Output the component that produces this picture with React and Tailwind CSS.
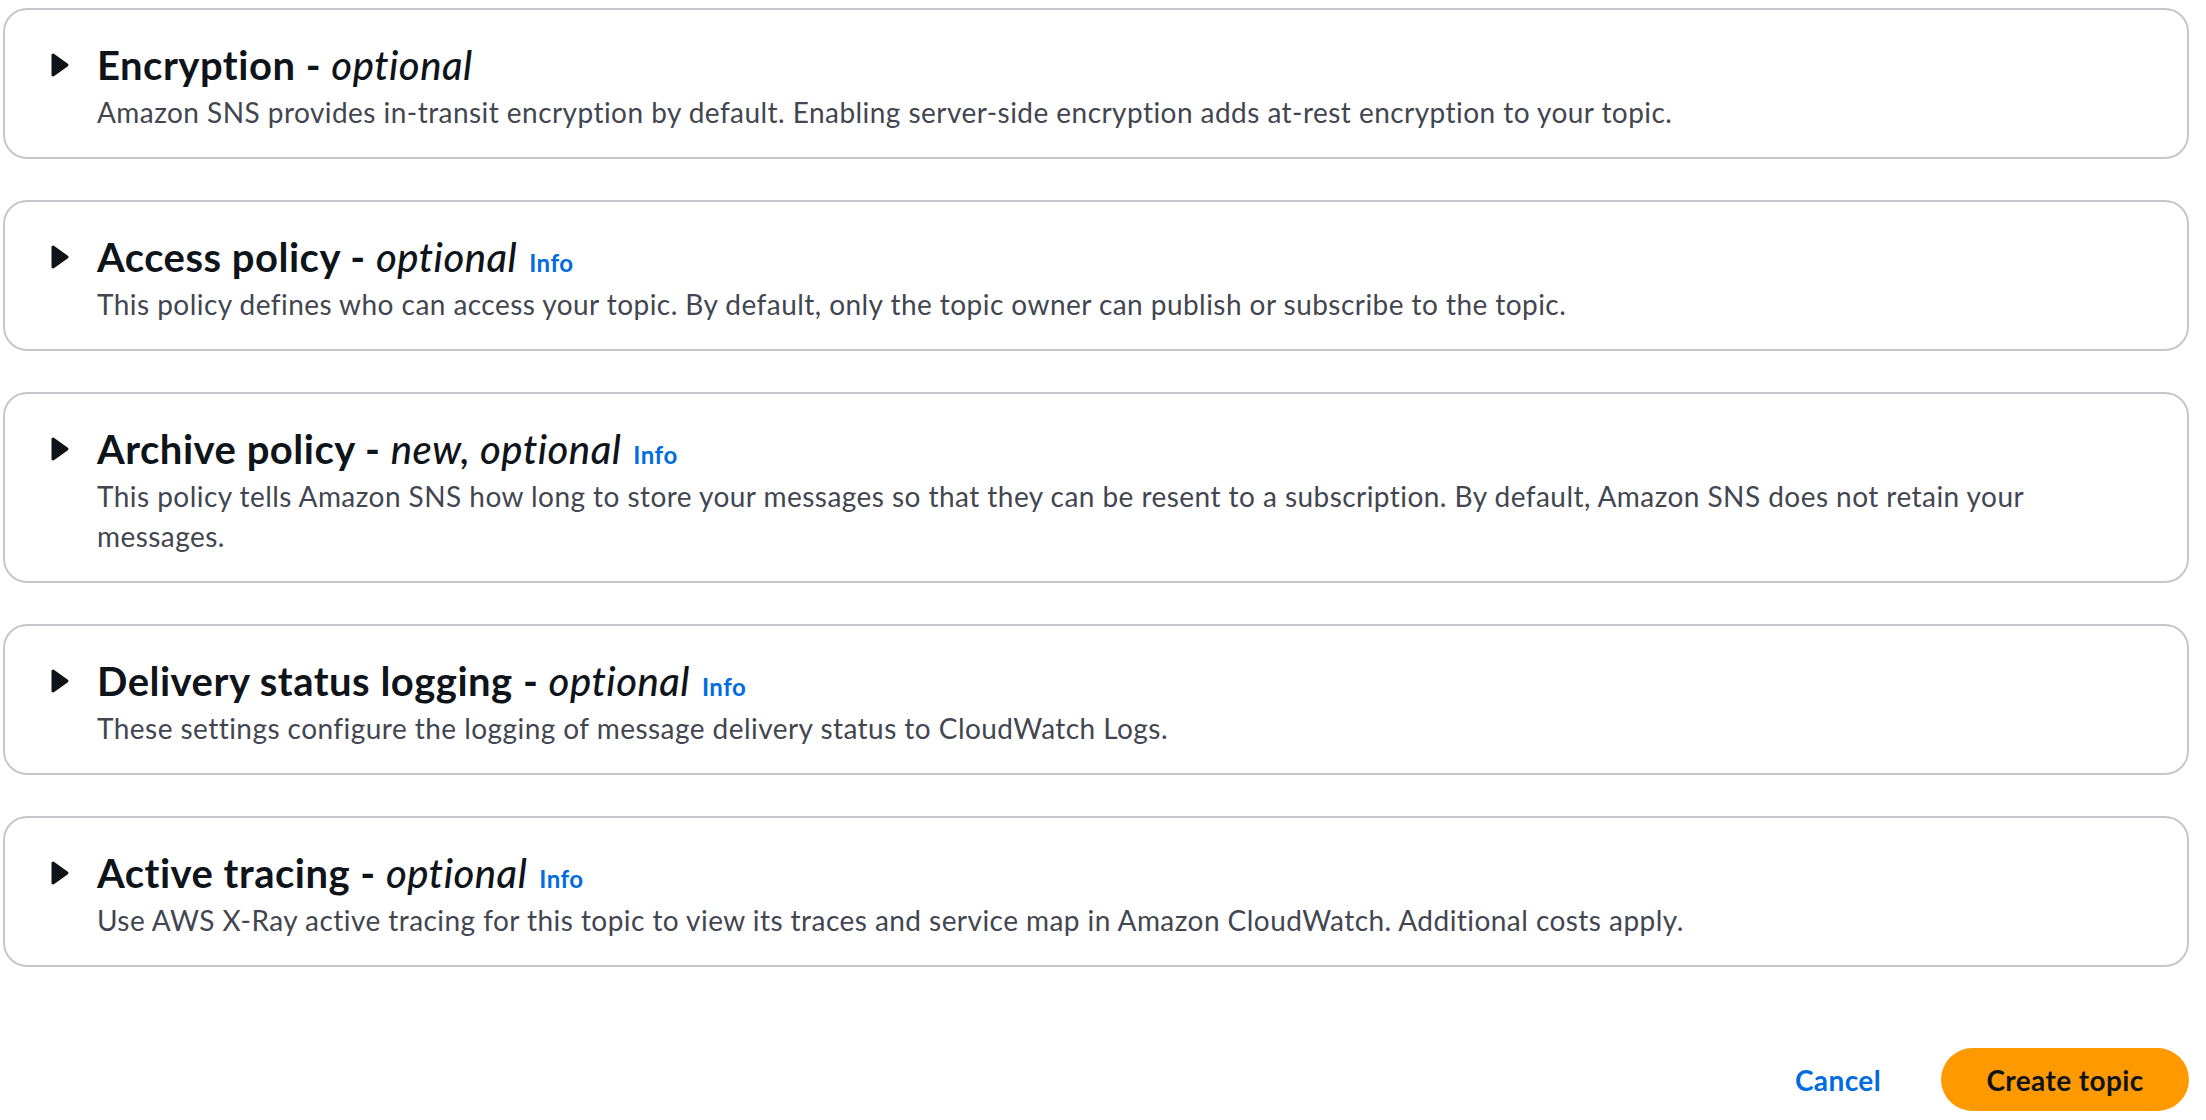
import React from 'react'

const SECTIONS = [
  {
    title: 'Encryption',
    tag: 'optional',
    info: false,
    desc: 'Amazon SNS provides in-transit encryption by default. Enabling server-side encryption adds at-rest encryption to your topic.',
  },
  {
    title: 'Access policy',
    tag: 'optional',
    info: true,
    desc: 'This policy defines who can access your topic. By default, only the topic owner can publish or subscribe to the topic.',
  },
  {
    title: 'Archive policy',
    tag: 'new, optional',
    info: true,
    desc: 'This policy tells Amazon SNS how long to store your messages so that they can be resent to a subscription. By default, Amazon SNS does not retain your messages.',
  },
  {
    title: 'Delivery status logging',
    tag: 'optional',
    info: true,
    desc: 'These settings configure the logging of message delivery status to CloudWatch Logs.',
  },
  {
    title: 'Active tracing',
    tag: 'optional',
    info: true,
    desc: 'Use AWS X-Ray active tracing for this topic to view its traces and service map in Amazon CloudWatch. Additional costs apply.',
  },
]

function Caret() {
  return (
    <svg width="20" height="26" viewBox="0 0 20 26" aria-hidden="true">
      <path d="M3 3 L17 13 L3 23 Z" fill="#0f141a" stroke="#0f141a" strokeWidth="3" strokeLinejoin="round" />
    </svg>
  )
}

function Section({ title, tag, info, desc }) {
  return (
    <div className="flex border-2 border-[#c6c6cd] rounded-[24px] bg-white pt-[31px] pb-[25px] pl-[45px] pr-[40px]">
      <div className="h-[48px] w-[20px] mr-[27px] flex items-center shrink-0">
        <Caret />
      </div>
      <div className="flex-1 min-w-0">
        <h2 className="text-[40px] leading-[48px] font-bold text-[#0f141a] tracking-[0.5px]">
          {title} - <i className="font-medium">{tag}</i>
          {info && (
            <a href="#" className="ml-[12px] text-[24px] leading-[24px] font-bold text-[#006ce0] tracking-[0.5px]">Info</a>
          )}
        </h2>
        <p className="mt-[3px] text-[28px] leading-[40px] text-[#424650] tracking-[0.45px]">{desc}</p>
      </div>
    </div>
  )
}

export default function App() {
  return (
    <div className="min-h-screen bg-white pt-[8px] pl-[3px] w-[2189px]" style={{ fontFamily: 'Lato, "Open Sans", sans-serif' }}>
      <div className="flex flex-col gap-[41px]">
        {SECTIONS.map(s => <Section key={s.title} {...s} />)}
      </div>
      <div className="flex justify-end items-center mt-[81px] gap-[60px]">
        <button className="text-[28px] font-bold text-[#006ce0] tracking-[0.4px]">Cancel</button>
        <button className="h-[63px] w-[248px] rounded-full bg-[#ff9900] text-[28px] font-bold text-[#0f141a] tracking-[0.4px]">Create topic</button>
      </div>
    </div>
  )
}
